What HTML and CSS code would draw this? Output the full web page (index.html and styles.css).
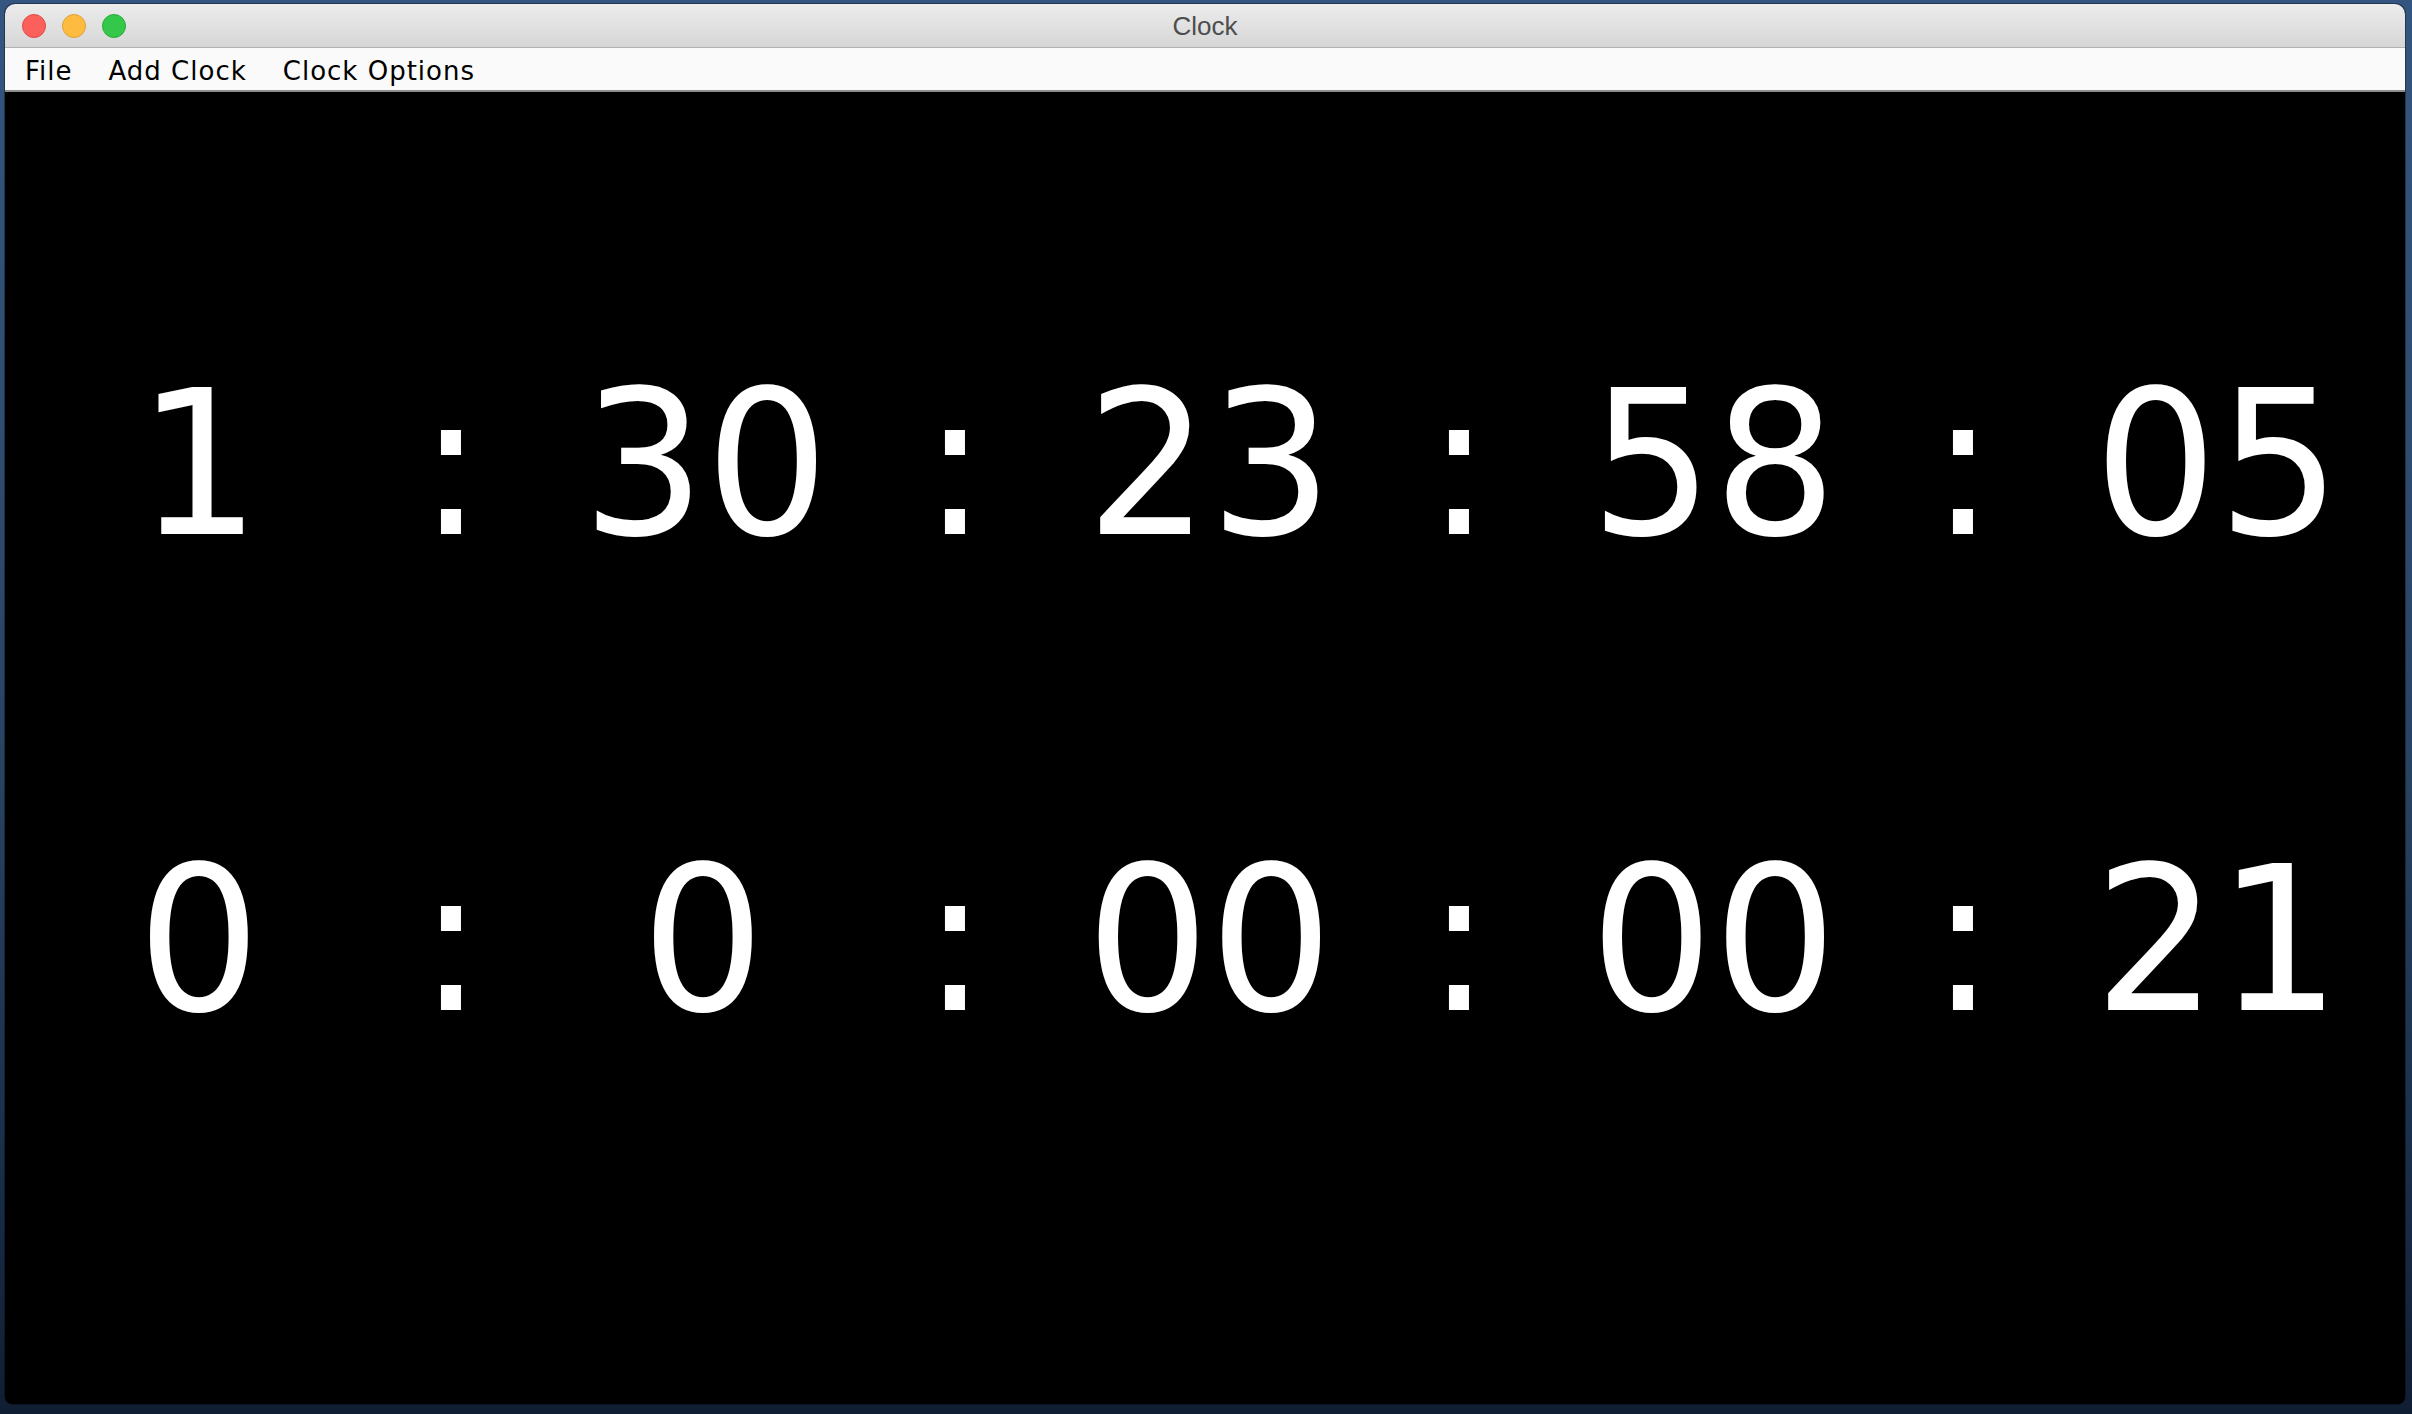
FILE: index.html
```html
<!DOCTYPE html>
<html lang="en">
<head>
<meta charset="utf-8">
<title>Clock</title>
<link rel="stylesheet" href="styles.css">
</head>
<body>
<div class="window">
  <header class="titlebar">
    <div class="lights">
      <span class="light red"></span>
      <span class="light yellow"></span>
      <span class="light green"></span>
    </div>
    <div class="title">Clock</div>
    <div></div>
  </header>
  <nav class="menubar">
    <span class="menu-item">File</span>
    <span class="menu-item">Add Clock</span>
    <span class="menu-item">Clock Options</span>
  </nav>
  <main class="content">
    <div class="clock-row">
      <span class="cell">1</span><span class="cell">:</span>
      <span class="cell">30</span><span class="cell">:</span>
      <span class="cell">23</span><span class="cell">:</span>
      <span class="cell">58</span><span class="cell">:</span>
      <span class="cell">05</span>
    </div>
    <div class="clock-row">
      <span class="cell">0</span><span class="cell">:</span>
      <span class="cell">0</span><span class="cell">:</span>
      <span class="cell">00</span><span class="cell">:</span>
      <span class="cell">00</span><span class="cell">:</span>
      <span class="cell">21</span>
    </div>
  </main>
</div>
</body>
</html>
```

FILE: styles.css
```css
html, body {
  margin: 0;
  padding: 0;
}

body {
  width: 2412px;
  height: 1414px;
  overflow: hidden;
  background: linear-gradient(180deg, #34557f 0%, #2f4d70 30%, #284262 55%, #1b304c 80%, #101e33 100%);
  font-family: "DejaVu Sans", sans-serif;
}

.window {
  margin: 4px 0 0 5px;
  width: 2400px;
  height: 1400px;
  border-radius: 10px 10px 8px 8px;
  overflow: hidden;
  display: flex;
  flex-direction: column;
  background: #000;
  box-shadow: 0 0 0 1px rgba(0, 0, 0, 0.35);
}

.titlebar {
  height: 43px;
  border-bottom: 1px solid #b1b1b1;
  background: linear-gradient(180deg, #ececec 0%, #d6d6d6 100%);
  display: grid;
  grid-template-columns: 1fr auto 1fr;
  align-items: center;
  flex: none;
}

.lights {
  display: flex;
  gap: 16px;
  padding-left: 17px;
  align-items: center;
}

.light {
  width: 22px;
  height: 22px;
  border-radius: 50%;
  border: 1px solid transparent;
}

.red {
  background: #fc605c;
  border-color: #de4a44;
}

.yellow {
  background: #fdbc40;
  border-color: #dea236;
}

.green {
  background: #34c84a;
  border-color: #27aa35;
}

.title {
  font-family: "Liberation Sans", Arial, sans-serif;
  font-size: 26px;
  color: #4d4d4d;
  padding-top: 2px;
}

.menubar {
  height: 42px;
  border-bottom: 2px solid #8e8e8e;
  background: #fafafa;
  display: flex;
  align-items: center;
  gap: 36px;
  padding-left: 20px;
  flex: none;
}

.menu-item {
  font-family: "DejaVu Sans", sans-serif;
  font-size: 26px;
  letter-spacing: 1px;
  color: #000;
  padding-top: 3px;
}

.content {
  flex: 1;
  background: #000;
  padding-top: 271px;
  display: flex;
  flex-direction: column;
  gap: 274px;
}

.clock-row {
  display: grid;
  grid-template-columns: repeat(9, 252px);
  padding-left: 68px;
}

.cell {
  font-family: "DejaVu Sans", sans-serif;
  font-size: 202px;
  line-height: 202px;
  color: #fff;
  text-align: center;
  transform: scaleX(0.96);
}
```
